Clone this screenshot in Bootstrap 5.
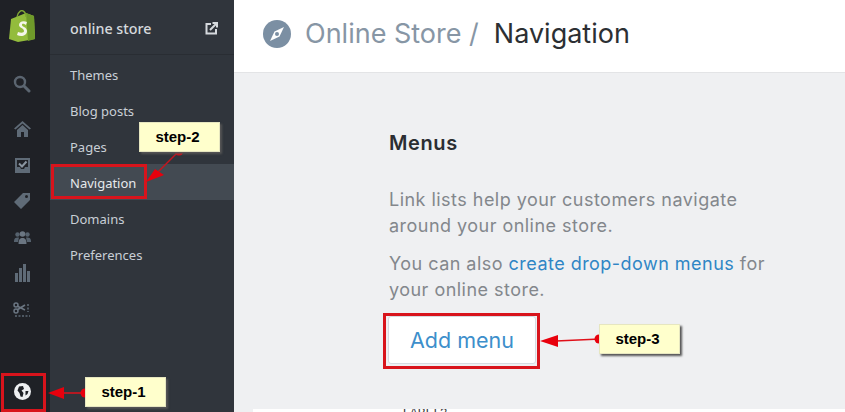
<!DOCTYPE html>
<html lang="en">
<head>
<meta charset="UTF-8">
<meta name="viewport" content="width=device-width, initial-scale=1.0">
<title>Online Store / Navigation</title>
<link rel="stylesheet" href="https://cdn.jsdelivr.net/npm/bootstrap@5.3.0/dist/css/bootstrap.min.css">
<style>
html, body { height: 412px; overflow: hidden; }
body { background: #eff0f2; position: relative; width: 845px; }
.shell { height: 412px; }
.rail { width: 50px; background: #1f2126; padding: 10px 6px 0 0; }
.rail-ico { height: 36px; }
.rail-logo { height: 56px; }
.rail-search { margin-bottom: 9px; }
.rail-globe { height: 40px; padding-top: 11px; }
.subnav { width: 184px; background: #30353c; font-family: "Noto Sans", sans-serif; }
.subnav-head { height: 55px; padding: 3px 16px 0 20px; border-bottom: 1px solid #292d33; color: #d5d9dd; font-size: 14.3px; font-weight: 500; }
.subnav-list { padding-top: 1px; }
.subnav-item { height: 36px; padding: 4px 0 0 20px; color: #c9cfd6; font-size: 13px; text-decoration: none; }
.subnav-item.is-on { background: #434a52; color: #e6e9ec; }
.main-col { min-width: 0; }
.page-head { height: 73px; background: #fff; border-bottom: 1px solid #e3e4e6; padding: 0 0 4px 29px; font-family: Inter, sans-serif; font-size: 27px; font-weight: 400; }
.crumb { color: #8796a5; margin-left: 14px; }
.crumb-now { color: #2c2f33; margin-left: 15px; }
.page-body { padding: 58px 0 0 155px; font-family: Inter, sans-serif; position: relative; }
.menus-title { font-size: 20px; font-weight: 600; letter-spacing: .6px; color: #2b2e32; line-height: 24px; margin-bottom: 32px; }
.menus-text { font-size: 18px; letter-spacing: .47px; line-height: 26px; color: #83878c; width: 385px; margin-bottom: 12px; }
.menus-text a { color: #2f86c5; text-decoration: none; }
.add-btn { display: block; width: 148px; height: 48px; background: #fff; border: 1px solid #d6dbe2; border-radius: 3px; color: #3d8fcb; font-size: 21.5px; margin: 13px 0 0 -1px; padding: 0; }
.cut-panel { position: absolute; left: 19px; top: 336px; width: 592px; height: 10px; background: #fff; overflow: hidden; }
.cut-panel span { position: absolute; left: 150px; top: -2px; font: 12px/12px "Liberation Sans", sans-serif; color: #333; }
.step-note { position: absolute; width: 81px; height: 30px; padding-right: 4px; background: #ffffcc; box-shadow: 2px 2px 2px #555; border: 1px solid #e6e6c0; color: #000; font: bold 15px/28px "Liberation Sans", sans-serif; text-align: center; }
.note-1 { left: 85px; top: 377px; }
.note-2 { left: 139px; top: 122px; }
.note-3 { left: 599px; top: 324px; }
.red-box { position: absolute; border: 3px solid #d8141c; }
.box-1 { left: 1px; top: 373px; width: 45px; height: 39px; }
.box-2 { left: 51px; top: 164px; width: 96px; height: 35px; }
.box-3 { left: 383px; top: 313px; width: 157px; height: 56px; }
.marks { position: absolute; left: 0; top: 0; }
</style>
</head>
<body>
<div class="shell d-flex">
    <!-- icon rail -->
    <div class="rail d-flex flex-column flex-shrink-0">
        <div class="rail-logo d-flex justify-content-center">
            <svg width="27" height="32" viewBox="0 0 27 32"><path d="M2 9 L17 3 L25 6 L26 29 L9 32 L0 29 Z" fill="#93bc3c"/><path d="M17 3 L25 6 L26 29 L19 31 Z" fill="#6f9a2a"/><path d="M8 7 C9 1 13 0 14 1 C16 2 17 4 17 7" fill="none" stroke="#7fa634" stroke-width="1.4"/><path d="M18 12 C14 10 10 12 10 15 C10 18 15 18 15 21 C15 23 12 23 9 22 L8 25 C12 27 18 26 18 21 C18 17 13 17 13 15 C13 13 15 14 17 15 Z" fill="#f4f6ea"/></svg>
        </div>
        <div class="rail-ico rail-search d-flex align-items-center justify-content-center">
            <svg width="18" height="18" viewBox="0 0 18 18"><circle cx="7" cy="7" r="5" fill="none" stroke="#5b6570" stroke-width="2.4"/><path d="M11 11 L16 16" stroke="#5b6570" stroke-width="3" stroke-linecap="round"/></svg>
        </div>
        <div class="rail-ico d-flex align-items-center justify-content-center">
            <svg width="17" height="16" viewBox="0 0 17 16"><path d="M8.5 0 L17 7.5 L15.5 8.5 L8.5 2.5 L1.5 8.5 L0 7.5 Z M3 9 L8.5 4 L14 9 V16 H10 V11 H7 V16 H3 Z" fill="#5f6b77"/></svg>
        </div>
        <div class="rail-ico d-flex align-items-center justify-content-center">
            <svg width="15" height="15" viewBox="0 0 15 15"><path fill-rule="evenodd" d="M0 0 H15 V15 H0 Z M2 2 V13 H13 V2 Z" fill="#5f6b77"/><path d="M2 9 H5 L6 11 H9 L10 9 H13 V13 H2 Z" fill="#5f6b77"/><path d="M4 5.5 L7 8.5 L11.5 3.5" fill="none" stroke="#8a95a0" stroke-width="2"/></svg>
        </div>
        <div class="rail-ico d-flex align-items-center justify-content-center">
            <svg width="16" height="16" viewBox="0 0 16 16"><path fill-rule="evenodd" d="M9 0 H16 V7 L7 16 L0 9 Z M12.5 2 A1.5 1.5 0 1 0 12.5 5 A1.5 1.5 0 1 0 12.5 2 Z" fill="#5f6b77"/></svg>
        </div>
        <div class="rail-ico d-flex align-items-center justify-content-center">
            <svg width="17" height="13" viewBox="0 0 17 13"><circle cx="3.5" cy="3.5" r="2.2" fill="#56626e"/><circle cx="13.5" cy="3.5" r="2.2" fill="#56626e"/><path d="M0 10 C0 7.5 1.5 6.5 3.5 6.5 L5 6.5 L4 11 H0 Z M17 10 C17 7.5 15.5 6.5 13.5 6.5 L12 6.5 L13 11 H17 Z" fill="#56626e"/><circle cx="8.5" cy="3" r="2.8" fill="#6b7682"/><path d="M4.5 13 C4.5 8.5 6 7 8.5 7 C11 7 12.5 8.5 12.5 13 Z" fill="#6b7682"/></svg>
        </div>
        <div class="rail-ico d-flex align-items-center justify-content-center">
            <svg width="15" height="18" viewBox="0 0 15 18"><path d="M0 9 H3 V18 H0 Z M4 4 H7 V18 H4 Z M8 0 H11 V18 H8 Z M12 7 H15 V18 H12 Z" fill="#5f6b77"/></svg>
        </div>
        <div class="rail-ico d-flex align-items-center justify-content-center">
            <svg width="18" height="15" viewBox="0 0 18 15"><circle cx="3" cy="3" r="2" fill="none" stroke="#6b7682" stroke-width="1.5"/><circle cx="3" cy="9" r="2" fill="none" stroke="#6b7682" stroke-width="1.5"/><path d="M4 4 L12 8 M4 8 L12 3" stroke="#6b7682" stroke-width="1.6"/><path d="M15 2 V10 M2 14 H17" stroke="#5f6b77" stroke-width="1.5" stroke-dasharray="2 1.5"/></svg>
        </div>
        <div class="flex-grow-1"></div>
        <div class="rail-globe d-flex align-items-start justify-content-center">
            <svg width="17" height="17" viewBox="0 0 17 17"><circle cx="8.5" cy="8.5" r="8.5" fill="#eef0f2"/><path d="M5 3.5 L9 3 L10 6 L7.5 7.5 L9.5 10 L8.5 14 L6.5 13.5 L5.5 10 L3.5 7.5 Z M11.5 8 L14.5 8 L13.5 11 L11.5 12.5 Z" fill="#1f2126"/></svg>
        </div>
    </div>

    <!-- sub navigation -->
    <div class="subnav d-flex flex-column flex-shrink-0">
        <div class="subnav-head d-flex align-items-center justify-content-between">
            <span>online store</span>
            <svg width="13" height="13" viewBox="0 0 13 13"><path d="M6 2 H1.5 V11.5 H11 V7" fill="none" stroke="#d5d9dd" stroke-width="2"/><path d="M5 8 L11 2 M7.5 1 H12 V5.5" fill="none" stroke="#d5d9dd" stroke-width="2"/></svg>
        </div>
        <nav class="subnav-list d-flex flex-column">
            <a class="subnav-item d-flex align-items-center" href="#">Themes</a>
            <a class="subnav-item d-flex align-items-center" href="#">Blog posts</a>
            <a class="subnav-item d-flex align-items-center" href="#">Pages</a>
            <a class="subnav-item is-on d-flex align-items-center" href="#">Navigation</a>
            <a class="subnav-item d-flex align-items-center" href="#">Domains</a>
            <a class="subnav-item d-flex align-items-center" href="#">Preferences</a>
        </nav>
    </div>

    <!-- main -->
    <div class="main-col flex-grow-1 d-flex flex-column">
        <div class="page-head d-flex align-items-center">
            <svg width="28" height="28" viewBox="0 0 28 28"><circle cx="14" cy="14" r="14" fill="#7b8fa3"/><path d="M21 7 L16.5 16.5 L7 21 L11.5 11.5 Z" fill="#fff"/><circle cx="14" cy="14" r="2" fill="#7b8fa3"/></svg>
            <span class="crumb">Online Store /</span>
            <span class="crumb-now">Navigation</span>
        </div>
        <div class="page-body flex-grow-1">
            <div class="menus-title">Menus</div>
            <p class="menus-text">Link lists help your customers navigate around your online store.</p>
            <p class="menus-text mb-0">You can also <a href="#">create drop-down menus</a> for your online store.</p>
            <button class="add-btn btn" type="button">Add menu</button>
            <div class="cut-panel"><span>LABEL?</span></div>
        </div>
    </div>
</div>

<!-- annotations -->
<div class="red-box box-1"></div>
<div class="red-box box-2"></div>
<div class="red-box box-3"></div>
<svg class="marks" width="845" height="412" viewBox="0 0 845 412">
    <path d="M86 393 H62" stroke="#e0101a" stroke-width="1.5"/>
    <path d="M48 393 L64 387 V399 Z" fill="#e8000d"/>
    <circle cx="85" cy="393" r="4.5" fill="#e8000d"/>
    <path d="M179 151 L158 172" stroke="#c8141c" stroke-width="1.5"/>
    <path d="M146 182 L155 169 L164 175 Z" fill="#e8000d"/>
    <circle cx="179" cy="151" r="4.5" fill="#e8000d"/>
    <path d="M600 339 L556 341" stroke="#e0101a" stroke-width="1.5"/>
    <path d="M540 341 L558 335 V347 Z" fill="#e8000d"/>
    <circle cx="599" cy="339" r="4.5" fill="#e8000d"/>
</svg>
<div class="step-note note-1">step-1</div>
<div class="step-note note-2">step-2</div>
<div class="step-note note-3">step-3</div>
<script src="https://cdn.jsdelivr.net/npm/bootstrap@5.3.0/dist/js/bootstrap.bundle.min.js"></script>
</body>
</html>
